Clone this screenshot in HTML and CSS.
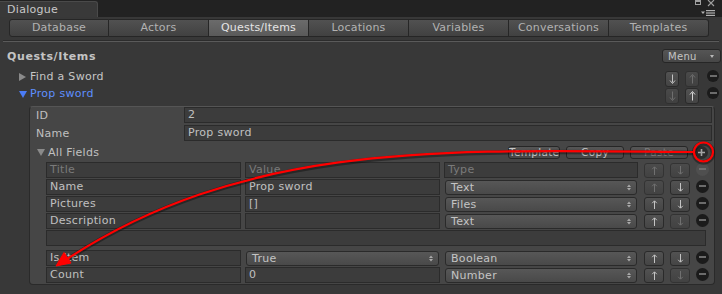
FILE: index.html
```html
<!DOCTYPE html>
<html>
<head>
<meta charset="utf-8">
<link rel="stylesheet" href="styles.css">
</head>
<body>
<div class="titlebar">
  <div class="wintab">Dialogue</div>
  <div class="winctl">
    <svg class="ico1" width="22" height="7" viewBox="0 0 22 7"><rect x="1.5" y="0.5" width="5" height="4" fill="none" stroke="#a0a0a0" stroke-width="1"/><rect x="1.5" y="0.5" width="5" height="1.5" fill="#a0a0a0"/><path d="M14 0 L20 6 M20 0 L14 6" stroke="#a0a0a0" stroke-width="1.1"/></svg>
    <svg class="ico2" width="15" height="6" viewBox="0 0 15 6"><path d="M0 1.5 H4 L2 4 Z" fill="#b0b0b0"/><rect x="5" y="0" width="9" height="1.2" fill="#b0b0b0"/><rect x="5" y="2.4" width="9" height="1.2" fill="#b0b0b0"/><rect x="5" y="4.8" width="9" height="1.2" fill="#b0b0b0"/></svg>
  </div>
</div>
<div class="toolbar">
  <div class="tab">Database</div>
  <div class="tab">Actors</div>
  <div class="tab sel">Quests/Items</div>
  <div class="tab">Locations</div>
  <div class="tab">Variables</div>
  <div class="tab">Conversations</div>
  <div class="tab">Templates</div>
</div>
<div class="sep"></div>
<div class="header">
  <span class="htitle">Quests/Items</span>
  <div class="menu"><span>Menu</span><span class="mtri"></span></div>
</div>
<div class="list">
  <div class="lrow">
    <span class="tri-r"></span><span class="lname">Find a Sword</span>
    <div class="ctrls">
      <div class="sbtn"><svg width="7" height="10" viewBox="0 0 7 10"><path d="M3.5 0.5 V8.5" stroke="#c4c4c4" stroke-width="1"/><path d="M1 6.5 L3.5 9.5 L6 6.5" fill="none" stroke="#c4c4c4" stroke-width="1"/></svg></div>
      <div class="sbtn s2 dim"><svg width="7" height="10" viewBox="0 0 7 10"><path d="M3.5 1.5 V9.5" stroke="#6e6e6e" stroke-width="1"/><path d="M1 3.5 L3.5 0.5 L6 3.5" fill="none" stroke="#6e6e6e" stroke-width="1"/></svg></div>
      <div class="minus lm"></div>
    </div>
  </div>
  <div class="lrow">
    <span class="tri-d blue"></span><span class="lname sel">Prop sword</span>
    <div class="ctrls">
      <div class="sbtn dim"><svg width="7" height="10" viewBox="0 0 7 10"><path d="M3.5 0.5 V8.5" stroke="#6e6e6e" stroke-width="1"/><path d="M1 6.5 L3.5 9.5 L6 6.5" fill="none" stroke="#6e6e6e" stroke-width="1"/></svg></div>
      <div class="sbtn s2"><svg width="7" height="10" viewBox="0 0 7 10"><path d="M3.5 1.5 V9.5" stroke="#d8d8d8" stroke-width="1"/><path d="M1 3.5 L3.5 0.5 L6 3.5" fill="none" stroke="#d8d8d8" stroke-width="1"/></svg></div>
      <div class="minus lm"></div>
    </div>
  </div>
</div>
<div class="box">
  <div class="prow"><span class="plabel">ID</span><div class="field wide">2</div></div>
  <div class="prow"><span class="plabel">Name</span><div class="field wide">Prop sword</div></div>
  <div class="afrow">
    <span class="tri-d grey"></span><span>All Fields</span>
    <div class="afbtns">
      <div class="abtn w52">Template</div>
      <div class="abtn w58">Copy</div>
      <div class="abtn w58 dimt">Paste</div>
      <div class="plus"><svg width="7" height="7" viewBox="0 0 7 7"><path d="M3.5 0 V7 M0 3.5 H7" stroke="#a4a4a4" stroke-width="1.6"/></svg></div>
    </div>
  </div>
  <div class="tbl">
    <div class="trow">
      <div class="field c1 hdr">Title</div>
      <div class="field c2 hdr">Value</div>
      <div class="field c3 hdr">Type</div>
      <div class="tbtn ub dim"><svg width="7" height="9" viewBox="0 0 7 9"><path d="M3.5 1 V9" stroke="#707070"/><path d="M1.2 3.2 L3.5 0.8 L5.8 3.2" fill="none" stroke="#707070"/></svg></div>
      <div class="tbtn db dim"><svg width="7" height="9" viewBox="0 0 7 9"><path d="M3.5 0 V8" stroke="#707070"/><path d="M1.2 5.8 L3.5 8.2 L5.8 5.8" fill="none" stroke="#707070"/></svg></div>
      <div class="minus tm dimm"></div>
    </div>
    <div class="trow">
      <div class="field c1">Name</div>
      <div class="field c2">Prop sword</div>
      <div class="c3"><div class="dd"><span>Text</span><svg class="ud" width="4" height="7" viewBox="0 0 4 7"><path d="M0 3 L2 0.5 L4 3 Z M0 4 L2 6.5 L4 4 Z" fill="#aaa"/></svg></div></div>
      <div class="tbtn ub dim"><svg width="7" height="9" viewBox="0 0 7 9"><path d="M3.5 1 V9" stroke="#707070"/><path d="M1.2 3.2 L3.5 0.8 L5.8 3.2" fill="none" stroke="#707070"/></svg></div>
      <div class="tbtn db"><svg width="7" height="9" viewBox="0 0 7 9"><path d="M3.5 0 V8" stroke="#c4c4c4"/><path d="M1.2 5.8 L3.5 8.2 L5.8 5.8" fill="none" stroke="#c4c4c4"/></svg></div>
      <div class="minus tm"></div>
    </div>
    <div class="trow">
      <div class="field c1">Pictures</div>
      <div class="field c2">[]</div>
      <div class="c3"><div class="dd"><span>Files</span><svg class="ud" width="4" height="7" viewBox="0 0 4 7"><path d="M0 3 L2 0.5 L4 3 Z M0 4 L2 6.5 L4 4 Z" fill="#aaa"/></svg></div></div>
      <div class="tbtn ub"><svg width="7" height="9" viewBox="0 0 7 9"><path d="M3.5 1 V9" stroke="#c4c4c4"/><path d="M1.2 3.2 L3.5 0.8 L5.8 3.2" fill="none" stroke="#c4c4c4"/></svg></div>
      <div class="tbtn db"><svg width="7" height="9" viewBox="0 0 7 9"><path d="M3.5 0 V8" stroke="#c4c4c4"/><path d="M1.2 5.8 L3.5 8.2 L5.8 5.8" fill="none" stroke="#c4c4c4"/></svg></div>
      <div class="minus tm"></div>
    </div>
    <div class="trow">
      <div class="field c1">Description</div>
      <div class="field c2"></div>
      <div class="c3"><div class="dd"><span>Text</span><svg class="ud" width="4" height="7" viewBox="0 0 4 7"><path d="M0 3 L2 0.5 L4 3 Z M0 4 L2 6.5 L4 4 Z" fill="#aaa"/></svg></div></div>
      <div class="tbtn ub"><svg width="7" height="9" viewBox="0 0 7 9"><path d="M3.5 1 V9" stroke="#c4c4c4"/><path d="M1.2 3.2 L3.5 0.8 L5.8 3.2" fill="none" stroke="#c4c4c4"/></svg></div>
      <div class="tbtn db dim"><svg width="7" height="9" viewBox="0 0 7 9"><path d="M3.5 0 V8" stroke="#707070"/><path d="M1.2 5.8 L3.5 8.2 L5.8 5.8" fill="none" stroke="#707070"/></svg></div>
      <div class="minus tm"></div>
    </div>
    <div class="trow">
      <div class="field long"></div>
    </div>
    <div class="trow gapt">
      <div class="field c1">Is Item</div>
      <div class="c2"><div class="dd"><span>True</span><svg class="ud" width="4" height="7" viewBox="0 0 4 7"><path d="M0 3 L2 0.5 L4 3 Z M0 4 L2 6.5 L4 4 Z" fill="#aaa"/></svg></div></div>
      <div class="c3"><div class="dd"><span>Boolean</span><svg class="ud" width="4" height="7" viewBox="0 0 4 7"><path d="M0 3 L2 0.5 L4 3 Z M0 4 L2 6.5 L4 4 Z" fill="#aaa"/></svg></div></div>
      <div class="tbtn ub"><svg width="7" height="9" viewBox="0 0 7 9"><path d="M3.5 1 V9" stroke="#c4c4c4"/><path d="M1.2 3.2 L3.5 0.8 L5.8 3.2" fill="none" stroke="#c4c4c4"/></svg></div>
      <div class="tbtn db"><svg width="7" height="9" viewBox="0 0 7 9"><path d="M3.5 0 V8" stroke="#c4c4c4"/><path d="M1.2 5.8 L3.5 8.2 L5.8 5.8" fill="none" stroke="#c4c4c4"/></svg></div>
      <div class="minus tm"></div>
    </div>
    <div class="trow">
      <div class="field c1">Count</div>
      <div class="field c2">0</div>
      <div class="c3"><div class="dd"><span>Number</span><svg class="ud" width="4" height="7" viewBox="0 0 4 7"><path d="M0 3 L2 0.5 L4 3 Z M0 4 L2 6.5 L4 4 Z" fill="#aaa"/></svg></div></div>
      <div class="tbtn ub"><svg width="7" height="9" viewBox="0 0 7 9"><path d="M3.5 1 V9" stroke="#c4c4c4"/><path d="M1.2 3.2 L3.5 0.8 L5.8 3.2" fill="none" stroke="#c4c4c4"/></svg></div>
      <div class="tbtn db dim"><svg width="7" height="9" viewBox="0 0 7 9"><path d="M3.5 0 V8" stroke="#707070"/><path d="M1.2 5.8 L3.5 8.2 L5.8 5.8" fill="none" stroke="#707070"/></svg></div>
      <div class="minus tm"></div>
    </div>
  </div>
</div>
<svg class="overlay" width="722" height="294" viewBox="0 0 722 294">
  <g fill="none" stroke="#000" stroke-opacity="0.35" stroke-width="4.5">
    <path d="M695 153 C450 151 250 141 68 259"/>
    <circle cx="703.5" cy="153" r="9.5"/>
  </g>
  <g fill="none" stroke="#ff0000" stroke-width="2.2">
    <path d="M694 152 C450 150 250 140 68 258.4"/>
    <circle cx="703.5" cy="152" r="9.5"/>
  </g>
  <polygon points="56,266 71,263 64,252.5" fill="#ff0000" stroke="#ff0000" stroke-width="1" stroke-linejoin="round"/>
</svg>
</body>
</html>
```
FILE: styles.css
```css
* { box-sizing: border-box; margin: 0; padding: 0; }
body {
  margin: 0;
  width: 722px;
  height: 294px;
  overflow: hidden;
  background: #383838;
  font-family: "DejaVu Sans", "Liberation Sans", sans-serif;
  font-size: 11px;
  color: #c0c0c0;
  position: relative;
}
.titlebar {
  height: 17px;
  background: #222222;
  display: flex;
  align-items: flex-end;
}
.wintab {
  width: 98px;
  height: 16px;
  background: #393939;
  border: 1px solid #4a4a4a;
  border-bottom: none;
  border-left: none;
  border-radius: 0 3px 0 0;
  padding-left: 7px;
  line-height: 15px;
  color: #c8c8c8;
  letter-spacing: 0.3px;
}
.winctl {
  margin-left: auto;
  height: 17px;
  display: flex;
  flex-direction: column;
  align-items: flex-end;
  padding-right: 6px;
}
.ico1 { display: block; }
.ico2 { display: block; margin-top: 3px; }
.toolbar {
  display: flex;
  padding-left: 9px;
  margin-top: 2px;
  height: 18px;
}
.tab {
  width: 100px;
  height: 18px;
  border: 1px solid #262626;
  border-left-width: 0;
  background: linear-gradient(#515151, #414141);
  text-align: center;
  line-height: 16px;
  color: #b2b2b2;
  letter-spacing: 0.2px;
}
.tab:first-child { border-left-width: 1px; border-radius: 3px 0 0 3px; }
.tab:last-child { border-radius: 0 3px 3px 0; }
.tab.sel { background: linear-gradient(#6b6b6b, #5a5a5a); color: #e4e4e4; }
.sep {
  margin: 3px 3px 0 3px;
  height: 2px;
  border-top: 1px solid #2c2c2c;
  background: #5a5a5a;
}
.header {
  display: flex;
  align-items: center;
  height: 14px;
  margin-top: 7px;
  padding-left: 7px;
  padding-right: 1px;
}
.htitle { font-weight: bold; color: #c4c4c4; letter-spacing: 0.6px; }
.menu {
  margin-left: auto;
  width: 59px;
  height: 14px;
  border: 1px solid #262626;
  border-radius: 3px;
  background: linear-gradient(#555555, #474747);
  display: flex;
  align-items: center;
  justify-content: space-between;
  padding: 0 6px 0 5px;
  color: #c4c4c4;
  font-size: 10px;
  letter-spacing: 0.3px;
}
.mtri {
  width: 0; height: 0;
  border-left: 2.5px solid transparent;
  border-right: 2.5px solid transparent;
  border-top: 3px solid #b8b8b8;
}
.list { margin-top: 7px; }
.lrow {
  height: 17px;
  display: flex;
  align-items: center;
  padding-left: 19px;
  padding-right: 3px;
}
.tri-r {
  width: 0; height: 0;
  border-top: 4px solid transparent;
  border-bottom: 4px solid transparent;
  border-left: 7px solid #8a8a8a;
  margin-right: 4px;
  margin-bottom: 3px;
}
.tri-d {
  width: 0; height: 0;
  border-left: 4px solid transparent;
  border-right: 4px solid transparent;
  border-top: 7px solid #8a8a8a;
  margin-right: 3px;
}
.tri-d.blue { border-top-color: #4b7cf5; margin-bottom: 3px; }
.lname { padding-bottom: 4px; color: #c6c6c6; letter-spacing: 0.3px; }
.lname.sel { color: #5e8fff; }
.ctrls { margin-left: auto; display: flex; align-items: center; }
.sbtn {
  width: 14px;
  height: 16px;
  border: 1px solid #2a2a2a;
  border-radius: 3px;
  background: linear-gradient(#525252, #444444);
  display: flex;
  align-items: center;
  justify-content: center;
}
.sbtn.dim { background: linear-gradient(#4a4a4a, #404040); border-color: #303030; }
.sbtn.s2 { margin-left: 6px; }
.minus {
  border-radius: 50%;
  background: #1b1b1b;
  display: flex;
  align-items: center;
  justify-content: center;
}
.minus::after { content: ""; width: 7px; height: 2px; background: #6c6c6c; }
.minus.lm { width: 12px; height: 12px; margin-left: 8px; margin-bottom: 5px; }
.minus.tm { width: 13px; height: 13px; margin-left: 6px; margin-bottom: 2px; }
.minus.dimm { background: #4f4f4f; }
.minus.dimm::after { background: #6e6e6e; }
.box {
  margin: 2px 0 0 29px;
  width: 686px;
  height: 179px;
  background: #464646;
  border: 1px solid #2a2a2a;
  border-top-color: #555555;
  border-radius: 4px;
  padding-right: 2px;
}
.prow { display: flex; height: 16px; align-items: center; }
.prow + .prow { margin-top: 2px; }
.plabel { width: 154px; padding-left: 6px; letter-spacing: 0.3px; }
.field {
  height: 16px;
  background: #3c3c3c;
  border: 1px solid #2b2b2b;
  padding-left: 3px;
  line-height: 14px;
  color: #c0c0c0;
  white-space: nowrap;
  letter-spacing: 0.3px;
}
.field.wide { flex: 1; }
.afrow {
  height: 21px;
  display: flex;
  align-items: center;
  padding: 2px 4px 0 7px;
  letter-spacing: 0.3px;
}
.afbtns { margin-left: auto; display: flex; align-items: center; }
.abtn {
  height: 13px;
  border: 1px solid #262626;
  border-radius: 3px;
  background: linear-gradient(#555555, #484848);
  text-align: center;
  line-height: 11px;
  font-size: 10.5px;
  color: #c8c8c8;
}
.abtn.w52 { width: 52px; }
.abtn.w58 { width: 58px; margin-left: 6px; }
.abtn.dimt { color: #7c7c7c; }
.plus {
  width: 13px;
  height: 13px;
  margin-left: 7px;
  border-radius: 50%;
  background: #2b2b2b;
  display: flex;
  align-items: center;
  justify-content: center;
}
.plus svg { display: block; }
.tbl { margin-left: 16px; display: flex; flex-direction: column; gap: 1px; }
.trow { display: flex; height: 16px; align-items: center; }
.trow.gapt { margin-top: 3px; }
.c1 { width: 195px; }
.c2 { width: 195px; margin-left: 4px; }
.c3 { width: 194px; margin-left: 4px; }
.field.hdr { color: #7a7a7a; }
.field.long { width: 660px; }
.dd {
  height: 15px;
  margin: 0 1px;
  border: 1px solid #2a2a2a;
  border-radius: 3px;
  background: linear-gradient(#575757, #494949);
  display: flex;
  align-items: center;
  justify-content: space-between;
  padding: 0 5px 0 5px;
  color: #c4c4c4;
  line-height: 13px;
  letter-spacing: 0.3px;
}
.ud { display: block; }
.tbtn {
  width: 20px;
  height: 15px;
  margin-left: 6px;
  border: 1px solid #2a2a2a;
  border-radius: 3px;
  background: linear-gradient(#525252, #454545);
  display: flex;
  align-items: center;
  justify-content: center;
}
.tbtn.dim { background: linear-gradient(#4b4b4b, #424242); border-color: #333333; }
.overlay { position: absolute; left: 0; top: 0; pointer-events: none; }
```
